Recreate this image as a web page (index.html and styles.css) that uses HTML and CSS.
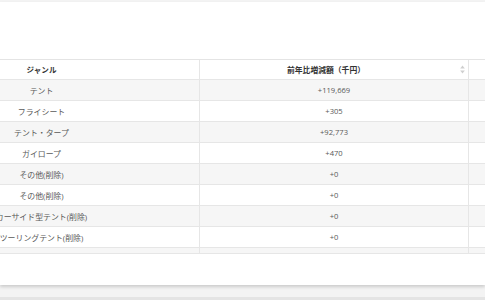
FILE: index.html
```html
<!DOCTYPE html>
<html lang="ja">
<head>
<meta charset="utf-8">
<link rel="stylesheet" href="styles.css">
</head>
<body>
<div class="card">
  <div class="scroller">
    <table class="grid">
      <thead>
        <tr>
          <th class="c1">ジャンル</th>
          <th class="c2 sortable">前年比増減額（千円）<svg class="sort" width="5" height="9" viewBox="0 0 5 9"><path d="M2.5 0.5 L4.8 3.6 L0.2 3.6 Z" fill="#cfcfcf"/><path d="M2.5 8.5 L4.8 5.4 L0.2 5.4 Z" fill="#cfcfcf"/></svg></th>
          <th class="c3"></th>
        </tr>
      </thead>
      <tbody>
        <tr><td class="jp">テント</td><td>+119,669</td><td></td></tr>
        <tr><td class="jp">フライシート</td><td>+305</td><td></td></tr>
        <tr><td class="jp">テント・タープ</td><td>+92,773</td><td></td></tr>
        <tr><td class="jp">ガイロープ</td><td>+470</td><td></td></tr>
        <tr><td class="jp">その他(削除)</td><td>+0</td><td></td></tr>
        <tr><td class="jp">その他(削除)</td><td>+0</td><td></td></tr>
        <tr><td class="jp">カーサイド型テント(削除)</td><td>+0</td><td></td></tr>
        <tr><td class="jp">ツーリングテント(削除)</td><td>+0</td><td></td></tr>
        <tr><td class="jp">ワンポールテント(削除)</td><td>+0</td><td></td></tr>
      </tbody>
    </table>
  </div>
</div>
<div class="next-card"></div>
</body>
</html>
```
FILE: styles.css
```css
html, body {
  margin: 0;
  padding: 0;
}
body {
  background: #f3f3f3;
  font-family: "Open Sans", "Noto Sans CJK JP", sans-serif;
  width: 485px;
  height: 300px;
  overflow: hidden;
}
.card {
  margin-top: 2px;
  height: 283px;
  background: #ffffff;
  padding-top: 57px;
  box-sizing: border-box;
  box-shadow: 0 2px 3px rgba(0, 0, 0, 0.16);
}
.scroller {
  height: 195px;
  overflow: hidden;
  border-bottom: 1px solid #e6e6e6;
  box-sizing: border-box;
}
.grid {
  margin-left: -116px;
  width: 785px;
  table-layout: fixed;
  border-collapse: separate;
  border-spacing: 0;
  border-top: 1px solid #e4e4e4;
  font-size: 7.6px;
}
.grid th,
.grid td {
  box-sizing: border-box;
  border-right: 1px solid #e6e6e6;
  border-bottom: 1px solid #e6e6e6;
  text-align: center;
  white-space: nowrap;
  padding: 0 4px;
}
.grid th {
  height: 20px;
  font-weight: 700;
  color: #333333;
  position: relative;
}
.grid td {
  height: 21px;
  color: #595959;
}
.grid td.jp {
  font-size: 7.9px;
}
.grid .c1 { width: 316px; }
.grid .c2 { width: 269px; }
.grid .c3 { width: 200px; }
.grid th.sortable {
  padding: 0 20px 0 4px;
  font-size: 7.8px;
}
.sort {
  position: absolute;
  right: 3px;
  top: 5px;
}
.grid tbody tr:nth-child(odd) td {
  background: #f6f6f6;
}
.next-card {
  margin-top: 12px;
  height: 10px;
  background: #e4e4e4;
}
```
